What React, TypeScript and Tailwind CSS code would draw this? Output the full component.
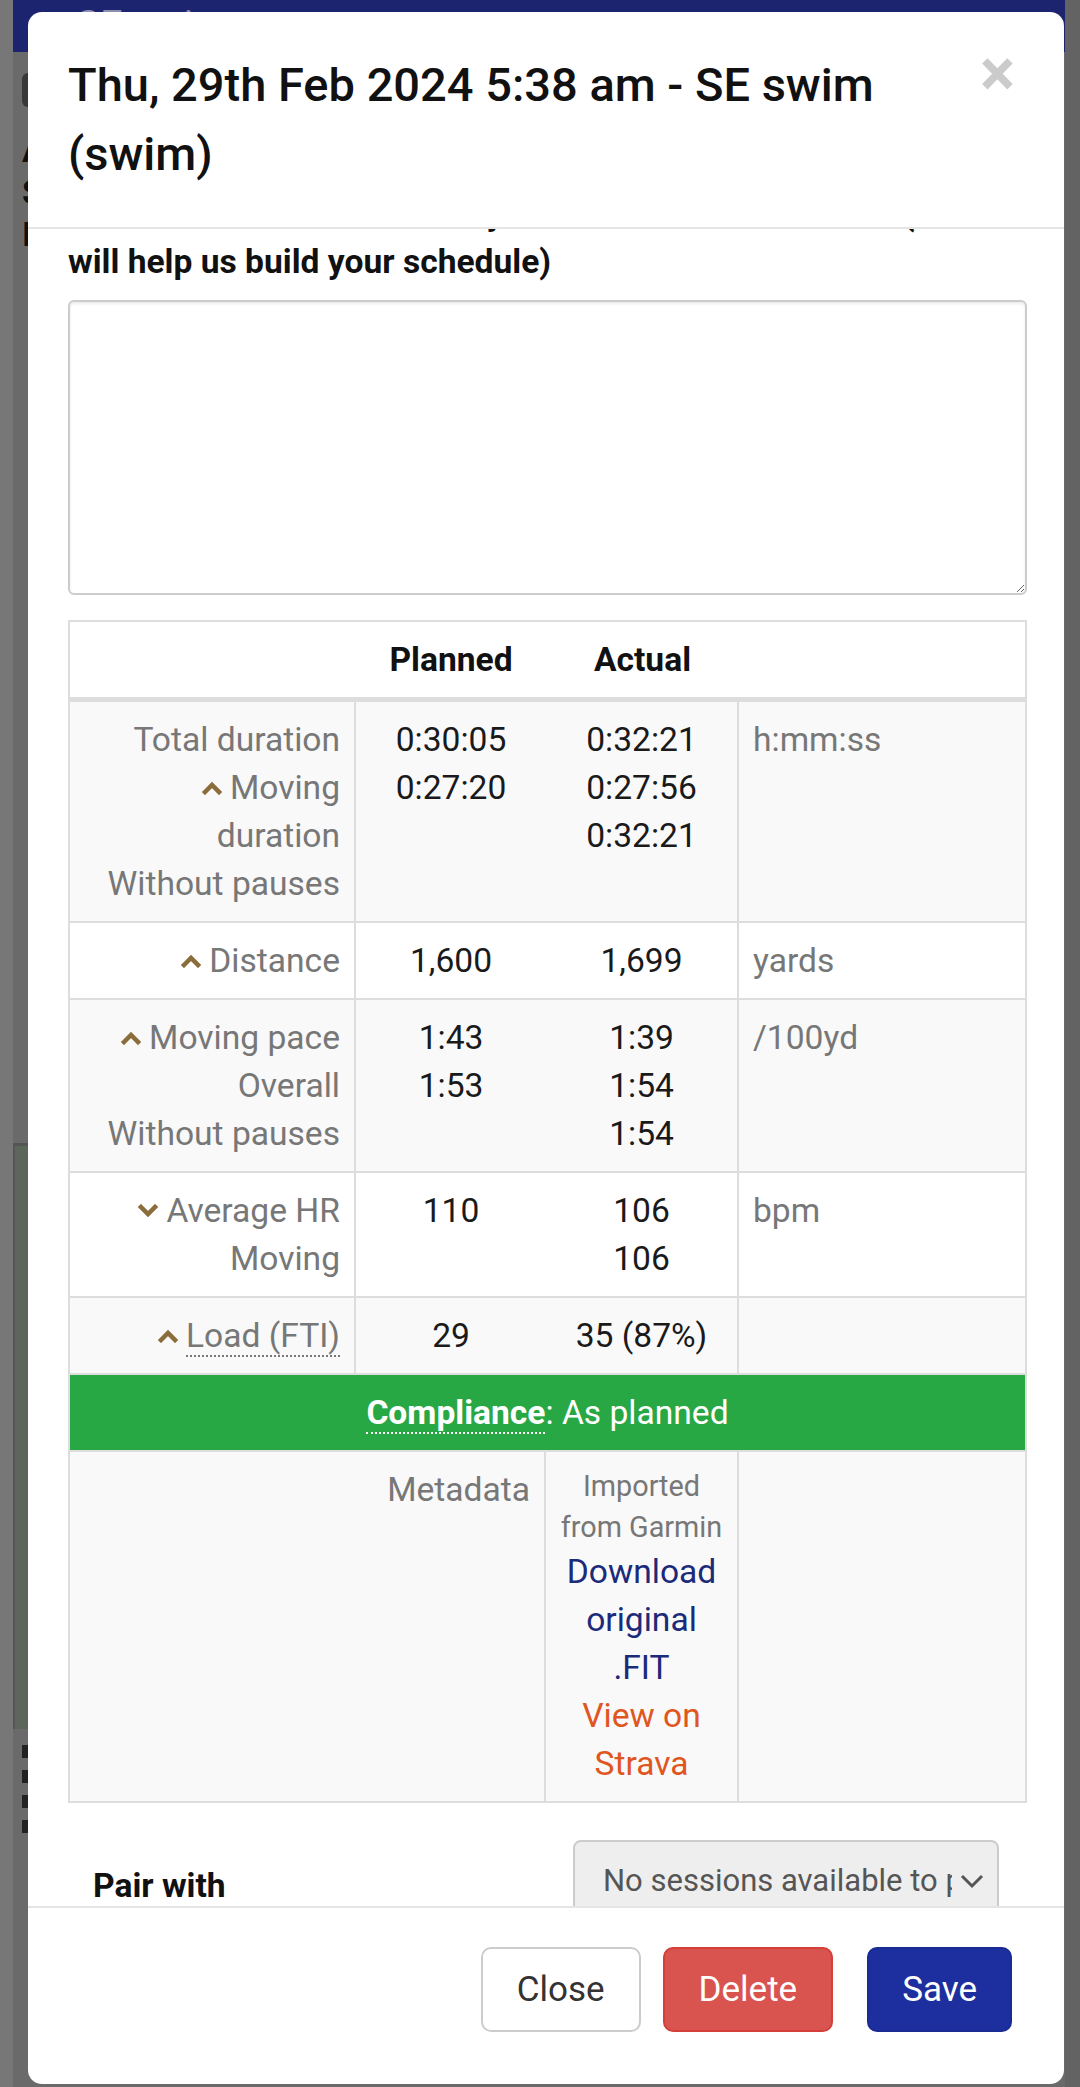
import React from "react";

const gold = "#8a6d3b";

function Chev({ down }: { down?: boolean }) {
  return (
    <svg width="20" height="14" viewBox="0 0 20 14" className="shrink-0">
      <polyline
        points={down ? "3,3 10,10 17,3" : "3,11 10,4 17,11"}
        fill="none"
        stroke={gold}
        strokeWidth="4.5"
        strokeLinecap="square"
      />
    </svg>
  );
}

function Lbl({ children, up, down }: { children: React.ReactNode; up?: boolean; down?: boolean }) {
  return (
    <div className="flex items-center justify-end gap-[8px]">
      {up && <Chev />}
      {down && <Chev down />}
      <span>{children}</span>
    </div>
  );
}

type RowProps = {
  striped?: boolean;
  label: React.ReactNode;
  planned: string[];
  actual: string[];
  unit?: string;
};

function Row({ striped, label, planned, actual, unit }: RowProps) {
  return (
    <div
      className={`grid grid-cols-[286px_190px_193px_1fr] border-b-2 border-[#ddd] ${
        striped ? "bg-[#f9f9f9]" : "bg-white"
      }`}
    >
      <div className="border-r-2 border-[#ddd] px-[14px] py-[13.5px] text-right text-[#777]">{label}</div>
      <div className="py-[13.5px] text-center text-[#1a1a1a]">
        {planned.map((v, i) => (
          <div key={i}>{v}</div>
        ))}
      </div>
      <div className="border-r-2 border-[#ddd] py-[13.5px] text-center text-[#1a1a1a]">
        {actual.map((v, i) => (
          <div key={i}>{v}</div>
        ))}
      </div>
      <div className="px-[14px] py-[13.5px] text-[#777]">{unit}</div>
    </div>
  );
}

function BackgroundPage() {
  return (
    <div className="flex h-full w-full">
      <div className="w-[13px] bg-[#777]" />
      <div className="flex flex-1 flex-col bg-[#6a6a6a]">
        <div className="h-[52px] bg-[#1c2470] pl-[25px] pt-[2px] text-[40px] leading-[48px] text-[#8c90b0]">
          ◦◦ SE swim
        </div>
        <div className="flex h-[1091px] flex-col pl-[9px]">
          <div className="mt-[21px] h-[34px] w-[40px] rounded-[6px] bg-[#383838]" />
          <div className="mt-[22px] text-[34px] font-bold leading-[42px] text-[#111]">A</div>
          <div className="text-[34px] font-bold leading-[42px] text-[#111]">S</div>
          <div className="text-[34px] font-bold leading-[42px] text-[#111]">I</div>
        </div>
        <div className="h-[586px] w-[60px] border-l-2 border-t-[3px] border-[#555] bg-[#5d665a]" />
        <div className="mt-[16px] flex flex-col gap-[12px] pl-[9px]">
          <div className="h-[13px] w-[20px] bg-[#222]" />
          <div className="h-[13px] w-[20px] bg-[#222]" />
          <div className="h-[13px] w-[20px] bg-[#222]" />
          <div className="h-[13px] w-[20px] bg-[#222]" />
        </div>
      </div>
      <div className="w-[15px] bg-[#636363]" />
    </div>
  );
}

export default function App() {
  return (
    <div
      className="relative h-[2087px] w-[1080px] overflow-hidden"
      style={{ fontFamily: "Roboto, 'Noto Sans', sans-serif" }}
    >
      <BackgroundPage />

      {/* modal */}
      <div className="absolute left-[28px] top-[12px] flex h-[2072px] w-[1036px] flex-col overflow-hidden rounded-[14px] bg-white text-[33.6px] leading-[48px]">
        {/* header */}
        <div className="flex items-start border-b-2 border-[#e5e5e5] pb-[39px] pl-[40px] pr-[49px] pt-[38px]">
          <h4 className="max-w-[900px] flex-1 text-[47px] font-medium leading-[69px] text-[#111]">
            Thu, 29th Feb 2024 5:38 am - SE swim (swim)
          </h4>
          <button className="-mt-[9px] ml-auto text-[66px] font-bold leading-[66px] text-black opacity-20">×</button>
        </div>

        {/* body */}
        <div className="min-h-0 flex-1 overflow-hidden">
          <div className="-mt-[39px] px-[40px]">
            <label className="block font-bold text-[#111]">
              <span className="block whitespace-nowrap">Add some notes about how you felt and what went well (it</span>
              <span className="block">will help us build your schedule)</span>
            </label>
            <textarea
              readOnly
              className="mt-[14px] block h-[295px] w-[959px] rounded-[6px] border-2 border-[#ccc] bg-white shadow-[inset_0_2px_3px_rgba(0,0,0,0.08)] outline-none"
            />

            {/* table */}
            <div className="mt-[25px] w-[959px] border-2 border-[#ddd]">
              <div className="grid grid-cols-[286px_190px_193px_1fr] border-b-[5px] border-[#ddd] bg-white font-bold text-[#111]">
                <div className="py-[13.5px]" />
                <div className="py-[13.5px] text-center">Planned</div>
                <div className="py-[13.5px] text-center">Actual</div>
                <div className="py-[13.5px]" />
              </div>

              <Row
                striped
                label={
                  <>
                    <Lbl>Total duration</Lbl>
                    <Lbl up>Moving</Lbl>
                    <Lbl>duration</Lbl>
                    <Lbl>Without pauses</Lbl>
                  </>
                }
                planned={["0:30:05", "0:27:20"]}
                actual={["0:32:21", "0:27:56", "0:32:21"]}
                unit="h:mm:ss"
              />
              <Row label={<Lbl up>Distance</Lbl>} planned={["1,600"]} actual={["1,699"]} unit="yards" />
              <Row
                striped
                label={
                  <>
                    <Lbl up>Moving pace</Lbl>
                    <Lbl>Overall</Lbl>
                    <Lbl>Without pauses</Lbl>
                  </>
                }
                planned={["1:43", "1:53"]}
                actual={["1:39", "1:54", "1:54"]}
                unit="/100yd"
              />
              <Row
                label={
                  <>
                    <Lbl down>Average HR</Lbl>
                    <Lbl>Moving</Lbl>
                  </>
                }
                planned={["110"]}
                actual={["106", "106"]}
                unit="bpm"
              />
              <Row
                striped
                label={
                  <Lbl up>
                    <span className="border-b-2 border-dotted border-[#777]">Load (FTI)</span>
                  </Lbl>
                }
                planned={["29"]}
                actual={["35 (87%)"]}
              />

              <div className="border-b-2 border-[#ddd] bg-[#28a745] py-[13.5px] text-center text-white">
                <span className="border-b-2 border-dotted border-white font-bold">Compliance</span>: As planned
              </div>

              <div className="grid grid-cols-[476px_193px_1fr] bg-[#f9f9f9]">
                <div className="border-r-2 border-[#ddd] px-[14px] py-[13.5px] text-right text-[#777]">Metadata</div>
                <div className="border-r-2 border-[#ddd] px-[12px] py-[13.5px] text-center">
                  <div className="text-[28.8px] leading-[41px] text-[#777]">Imported from Garmin</div>
                  <div className="text-[#1c2a7a]">Download original .FIT</div>
                  <div className="text-[#e0561f]">View on Strava</div>
                </div>
                <div />
              </div>
            </div>

            {/* pair with */}
            <div className="mt-[37px] flex items-start px-[25px]">
              <label className="pt-[22px] font-bold text-[#111]">Pair with</label>
              <div className="ml-auto flex h-[82px] w-[426px] items-center rounded-[8px] border-2 border-[#ccc] bg-[#eee] pl-[28px] pr-[10px] text-[31px] text-[#555]">
                <span className="w-[349px] overflow-hidden whitespace-nowrap">No sessions available to pair</span>
                <svg width="26" height="16" viewBox="0 0 26 16" className="ml-[7px]">
                  <polyline points="3,3 13,13 23,3" fill="none" stroke="#555" strokeWidth="3" />
                </svg>
              </div>
            </div>
          </div>
        </div>

        {/* footer */}
        <div className="flex h-[178px] shrink-0 items-start justify-end border-t-2 border-[#e5e5e5] pr-[52px] pt-[39px] text-[35px]">
          <button className="h-[85px] rounded-[10px] border-2 border-[#ccc] bg-white px-[34px] text-[#333]">
            Close
          </button>
          <button className="ml-[22px] h-[85px] rounded-[10px] border-2 border-[#d43f3a] bg-[#d9534f] px-[34px] text-white">
            Delete
          </button>
          <button className="ml-[34px] h-[85px] rounded-[10px] border-2 border-[#1a2b93] bg-[#1d2f9e] px-[33px] text-white">
            Save
          </button>
        </div>
      </div>
    </div>
  );
}
